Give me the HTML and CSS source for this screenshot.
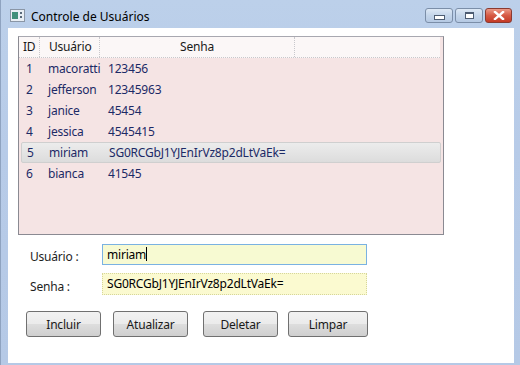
FILE: index.html
```html
<!DOCTYPE html>
<html lang="pt">
<head>
    <meta charset="UTF-8">
    <title>Controle de Usuários</title>
    <link rel="stylesheet" href="styles.css">
</head>
<body>
<div class="window">
    <div class="titlebar">
        <svg class="app-icon" width="15" height="13" viewBox="0 0 15 13">
            <rect x="0.5" y="0.5" width="14" height="12" fill="#e8eef4" stroke="#8a96a6"/>
            <rect x="2" y="3" width="6" height="7" fill="#3f8f7a"/>
            <rect x="10" y="3" width="2" height="2" fill="#5a6a7a"/>
            <rect x="10" y="7" width="2" height="2" fill="#5a6a7a"/>
        </svg>
        <span class="title">Controle de Usuários</span>
        <div class="caption-btns">
            <div class="cap-btn"><span class="min-glyph"></span></div>
            <div class="cap-btn"><span class="max-glyph"></span></div>
            <div class="cap-btn close">
                <svg width="12" height="9" viewBox="0 0 12 9">
                    <path d="M2 1 L10 8 M10 1 L2 8" stroke="#fff" stroke-width="2.4" stroke-linecap="square"/>
                </svg>
            </div>
        </div>
    </div>
    <div class="client">
        <div class="listview">
            <div class="lv-header">
                <div class="hcol col-id">ID</div>
                <div class="hcol col-user">Usuário</div>
                <div class="hcol col-pass center">Senha</div>
                <div class="hcol col-fill"></div>
            </div>
            <div class="lv-row"><span class="c-id">1</span><span class="c-user">macoratti</span><span class="c-pass">123456</span></div>
            <div class="lv-row"><span class="c-id">2</span><span class="c-user">jefferson</span><span class="c-pass">12345963</span></div>
            <div class="lv-row"><span class="c-id">3</span><span class="c-user">janice</span><span class="c-pass">45454</span></div>
            <div class="lv-row"><span class="c-id">4</span><span class="c-user">jessica</span><span class="c-pass">4545415</span></div>
            <div class="lv-row selected"><span class="c-id">5</span><span class="c-user">miriam</span><span class="c-pass">SG0RCGbJ1YJEnIrVz8p2dLtVaEk=</span></div>
            <div class="lv-row"><span class="c-id">6</span><span class="c-user">bianca</span><span class="c-pass">41545</span></div>
        </div>

        <div class="form-row first">
            <label class="form-label">Usuário :</label>
            <div class="field focused">miriam<span class="caret"></span></div>
        </div>
        <div class="form-row">
            <label class="form-label">Senha :</label>
            <div class="field dotted">SG0RCGbJ1YJEnIrVz8p2dLtVaEk=</div>
        </div>

        <div class="actions">
            <button class="btn">Incluir</button>
            <button class="btn">Atualizar</button>
            <button class="btn">Deletar</button>
            <button class="btn">Limpar</button>
        </div>
    </div>
</div>
</body>
</html>
```

FILE: styles.css
```css
body {
    margin: 0;
    padding: 0;
    font-family: 'Noto Sans', 'Open Sans', sans-serif;
    font-size: 12px;
    background: #fff;
}

.window {
    width: 520px;
    height: 365px;
    display: flex;
    flex-direction: column;
    box-sizing: border-box;
    background: linear-gradient(180deg, #bcd0ea 0%, #b7cbe8 40%, #b5c9e6 100%);
    border-left: 1px solid #8fa3c0;
    overflow: hidden;
}

.titlebar {
    height: 28px;
    display: flex;
    align-items: flex-start;
    padding-left: 9px;
    padding-right: 8px;
    box-sizing: border-box;
}

.app-icon {
    margin-top: 9px;
}

.title {
    margin-left: 6px;
    margin-top: 8px;
    font-size: 12px;
    color: #000;
}

.caption-btns {
    margin-left: auto;
    margin-top: 8px;
    display: flex;
    gap: 2px;
}

.cap-btn {
    width: 26px;
    height: 13px;
    border: 1px solid #7b8ea8;
    border-radius: 3px;
    background: linear-gradient(180deg, #dde8f5 0%, #c4d5ea 50%, #b5c9e3 100%);
    display: flex;
    align-items: center;
    justify-content: center;
}

.cap-btn.close {
    width: 25px;
    border-color: #8a3a30;
    background: linear-gradient(180deg, #eb9a88 0%, #d65a44 50%, #c43a26 100%);
}

.min-glyph {
    width: 9px;
    height: 3px;
    margin-top: 4px;
    background: #fff;
    border: 1px solid #4d5c72;
}

.max-glyph {
    width: 7px;
    height: 4px;
    border: 1px solid #4d5c72;
    border-top-width: 2px;
    background: #fff;
}

.client {
    flex: 1;
    margin: 0 6px 2px 7px;
    background: #fff;
    padding: 8px 0 0 10px;
    display: flex;
    flex-direction: column;
    letter-spacing: -0.2px;
}

.listview {
    width: 426px;
    height: 199px;
    box-sizing: border-box;
    border: 1px solid #8a8a92;
    border-top-color: #a8a8b0;
    background: #f5e4e4;
}

.lv-header {
    display: grid;
    grid-template-columns: 21px 60px 195px 1fr;
    height: 20px;
    background: #fbf7f7;
    border-bottom: 1px dotted #c8c8cc;
    margin-right: 3px;
}

.hcol {
    line-height: 20px;
    color: #1a1a1a;
    border-right: 1px dotted #c8c8cc;
    padding-left: 4px;
}

.hcol.col-user {
    padding-left: 9px;
}

.hcol.center {
    text-align: center;
    padding-left: 0;
}

.hcol.col-fill {
    border-right: none;
}

.lv-row {
    display: grid;
    grid-template-columns: 21px 60px 195px;
    height: 21px;
    line-height: 21px;
    color: #1c2a66;
    margin: 0 2px;
    box-sizing: border-box;
}

.lv-row .c-id {
    padding-left: 5px;
}

.lv-row .c-user {
    padding-left: 6px;
}

.lv-row .c-pass {
    padding-left: 6px;
    white-space: nowrap;
}

.lv-row.selected {
    background: linear-gradient(180deg, #ececec 0%, #dcdcdc 100%);
    border: 1px solid #cfcfcf;
    border-radius: 2px;
    line-height: 19px;
}

.form-row {
    display: flex;
    align-items: center;
    margin-top: 8px;
}

.form-row.first {
    margin-top: 9px;
}

.form-label {
    width: 72px;
    padding-left: 12px;
    color: #1e1e1e;
    margin-top: 4px;
}

.field {
    width: 265px;
    height: 22px;
    box-sizing: border-box;
    padding-left: 4px;
    line-height: 20px;
    color: #000;
    background: #f7fad2;
    border: 1px solid #b8c8b0;
}

.field.focused {
    border-color: #7ab2e2;
    height: 21px;
}

.field.dotted {
    border: 1px dotted #d6d69a;
    background: #fbfad0;
}

.caret {
    display: inline-block;
    width: 1px;
    height: 14px;
    background: #000;
    vertical-align: -2px;
}

.actions {
    display: flex;
    margin-top: 16px;
    padding-left: 8px;
}

.btn {
    width: 75px;
    height: 26px;
    margin-right: 12px;
    font-family: 'Noto Sans', 'Open Sans', sans-serif;
    font-size: 12px;
    letter-spacing: -0.2px;
    color: #1a1a1a;
    border: 1px solid #707070;
    border-radius: 3px;
    background: linear-gradient(180deg, #f2f2f2 0%, #ebebeb 48%, #dddddd 52%, #cfcfcf 100%);
    padding: 0;
}

.btn:nth-child(2) {
    margin-right: 15px;
}

.btn:nth-child(3) {
    margin-right: 10px;
}

.btn:nth-child(4) {
    width: 80px;
}
```
